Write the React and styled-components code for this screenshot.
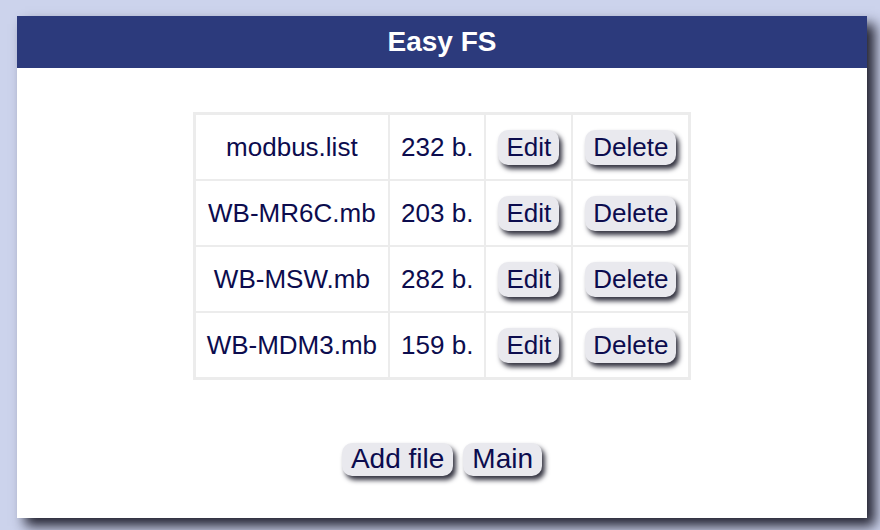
import React from "react";
import styled, { createGlobalStyle } from "styled-components";

const Global = createGlobalStyle`
  html, body { margin: 0; padding: 0; background: #ccd3ec; }
  body { font-family: "Liberation Sans", Arial, sans-serif; }
`;

const Page = styled.div`
  padding: 16px 13px 12px 17px;
`;

const Panel = styled.div`
  background: #ffffff;
  box-shadow: 8px 8px 12px #222230;
  height: 502px;
  display: flex;
  flex-direction: column;
  align-items: center;
`;

const Header = styled.h1`
  align-self: stretch;
  margin: 0;
  height: 52px;
  background: #2c3a7c;
  color: #ffffff;
  font-size: 28px;
  font-weight: bold;
  display: flex;
  align-items: center;
  justify-content: center;
`;

const Table = styled.table`
  margin-top: 44px;
  border-collapse: separate;
  border-spacing: 2px;
  background: #ececec;
  padding: 1px;
`;

const Cell = styled.td`
  background: #ffffff;
  height: 64px;
  padding: 0 ${(p) => (p.$btn ? 12 : 11)}px;
  text-align: center;
  vertical-align: middle;
  color: #0c0c4e;
  font-size: 26px;
`;

const Button = styled.button`
  font-family: "Liberation Sans", Arial, sans-serif;
  font-size: ${(p) => (p.$big ? 28 : 26)}px;
  color: #0c0c4e;
  background: #e9e9ee;
  border: none;
  border-radius: 10px;
  padding: ${(p) => (p.$big ? "1px 9px 2px" : "2px 8px 3px")};
  box-shadow: 3px 4px 5px #333340;
  line-height: 30px;
  cursor: pointer;
`;

const Actions = styled.div`
  margin-top: 63px;
  display: flex;
  gap: 10px;
`;

const files = [
  ["modbus.list", "232 b."],
  ["WB-MR6C.mb", "203 b."],
  ["WB-MSW.mb", "282 b."],
  ["WB-MDM3.mb", "159 b."],
];

export default function App() {
  return (
    <>
      <Global />
      <Page>
        <Panel>
          <Header>Easy FS</Header>
          <Table>
            <tbody>
              {files.map(([name, size]) => (
                <tr key={name}>
                  <Cell>{name}</Cell>
                  <Cell>{size}</Cell>
                  <Cell $btn>
                    <Button>Edit</Button>
                  </Cell>
                  <Cell $btn>
                    <Button>Delete</Button>
                  </Cell>
                </tr>
              ))}
            </tbody>
          </Table>
          <Actions>
            <Button $big>Add file</Button>
            <Button $big>Main</Button>
          </Actions>
        </Panel>
      </Page>
    </>
  );
}
